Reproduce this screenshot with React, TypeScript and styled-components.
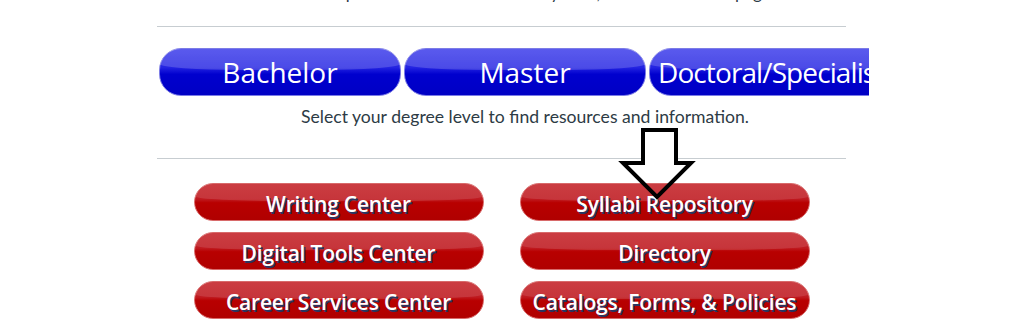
import styled, { createGlobalStyle, css } from "styled-components";

const GlobalStyle = createGlobalStyle`
  body {
    margin: 0;
    background: #fff;
    font-family: Lato, "Open Sans", sans-serif;
  }
`;

const Page = styled.div`
  position: relative;
  width: 689px;
  margin-left: 157px;
`;

const ClippedIntro = styled.div`
  height: 3px;
  overflow: hidden;
  display: flex;
  align-items: flex-end;
  justify-content: center;
  padding-left: 40px;

  span {
    font-size: 17px;
    line-height: 20px;
    color: #2d3b45;
    white-space: nowrap;
  }
`;

const Rule = styled.div<{ $top: number }>`
  height: 1px;
  background: #c7cdd1;
  margin-top: ${(p) => p.$top}px;
`;

const DegreeRow = styled.div`
  display: flex;
  gap: 3px;
  width: 710px;
  padding-left: 2px;
  margin-top: 21px;
  overflow: hidden;
`;

const gloss = css`
  position: relative;
  box-sizing: border-box;
  display: flex;
  align-items: center;
  justify-content: center;
  white-space: nowrap;
  cursor: pointer;
  font-family: "Open Sans", sans-serif;
  color: #fff;

  &::before {
    content: "";
    position: absolute;
    top: 0;
    left: 0;
    right: 0;
    height: 46%;
    border-radius: 22px 22px 50% 50% / 22px 22px 9px 9px;
    background: rgba(255, 255, 255, 0.18);
    pointer-events: none;
  }

  span {
    position: relative;
  }
`;

const DegreeButton = styled.div<{ $wide?: boolean }>`
  ${gloss}
  flex: 0 0 ${(p) => (p.$wide ? 270 : 242)}px;
  height: 48px;
  border-radius: 22px;
  border: 1px solid #7c7ce6;
  background: linear-gradient(#3636ea 0%, #2424e2 40%, #0000ce 55%, #0000c4 100%);
  font-size: 28px;
  justify-content: ${(p) => (p.$wide ? "flex-start" : "center")};
  padding-left: ${(p) => (p.$wide ? 8 : 0)}px;
  letter-spacing: ${(p) => (p.$wide ? -0.9 : 0)}px;
`;

const Caption = styled.p`
  margin: 11px 0 0;
  padding-left: 47px;
  text-align: center;
  font-size: 17.6px;
  line-height: 20px;
  color: #2d3b45;
`;

const ResourceGrid = styled.div`
  display: grid;
  grid-template-columns: 290px 290px;
  column-gap: 36px;
  row-gap: 11px;
  justify-content: center;
  margin-top: 24px;
`;

const ResourceButton = styled.div`
  ${gloss}
  height: 38px;
  padding-top: 3px;
  border-radius: 19px;
  border: 1px solid #d86a6a;
  background: linear-gradient(#c42228 0%, #bf1a20 42%, #b80000 52%, #b00000 100%);
  font-size: 21px;
  font-weight: 600;
  letter-spacing: -0.2px;
  text-shadow: 1.5px 1.5px 0 #2a3560;

  &::before {
    border-radius: 19px 19px 50% 50% / 19px 19px 7px 7px;
    background: rgba(255, 255, 255, 0.12);
  }
`;

const Arrow = styled.svg`
  position: absolute;
  left: 464px;
  top: 128px;
  width: 72px;
  height: 72px;
  overflow: visible;
`;

const degrees = [
  { label: "Bachelor" },
  { label: "Master" },
  { label: "Doctoral/Specialist", wide: true },
];

const resources = [
  "Writing Center",
  "Syllabi Repository",
  "Digital Tools Center",
  "Directory",
  "Career Services Center",
  "Catalogs, Forms, & Policies",
];

export default function App() {
  return (
    <>
      <GlobalStyle />
      <Page>
        <ClippedIntro>
          <span>Use the top menu to return here at any time, or bookmark this page.</span>
        </ClippedIntro>
        <Rule $top={23} />
        <DegreeRow>
          {degrees.map((d) => (
            <DegreeButton key={d.label} $wide={d.wide}>
              <span>{d.label}</span>
            </DegreeButton>
          ))}
        </DegreeRow>
        <Caption>Select your degree level to find resources and information.</Caption>
        <Rule $top={31} />
        <ResourceGrid>
          {resources.map((r) => (
            <ResourceButton key={r}>
              <span>{r}</span>
            </ResourceButton>
          ))}
        </ResourceGrid>
        <Arrow viewBox="0 0 72 72">
          <rect x="22" y="2" width="33" height="34" fill="#fff" />
          <path
            d="M22 2 H55 V35 H70 L36 69 L2 35 H22 Z"
            fill="none"
            stroke="#000"
            strokeWidth="4"
            strokeLinejoin="miter"
          />
        </Arrow>
      </Page>
    </>
  );
}
